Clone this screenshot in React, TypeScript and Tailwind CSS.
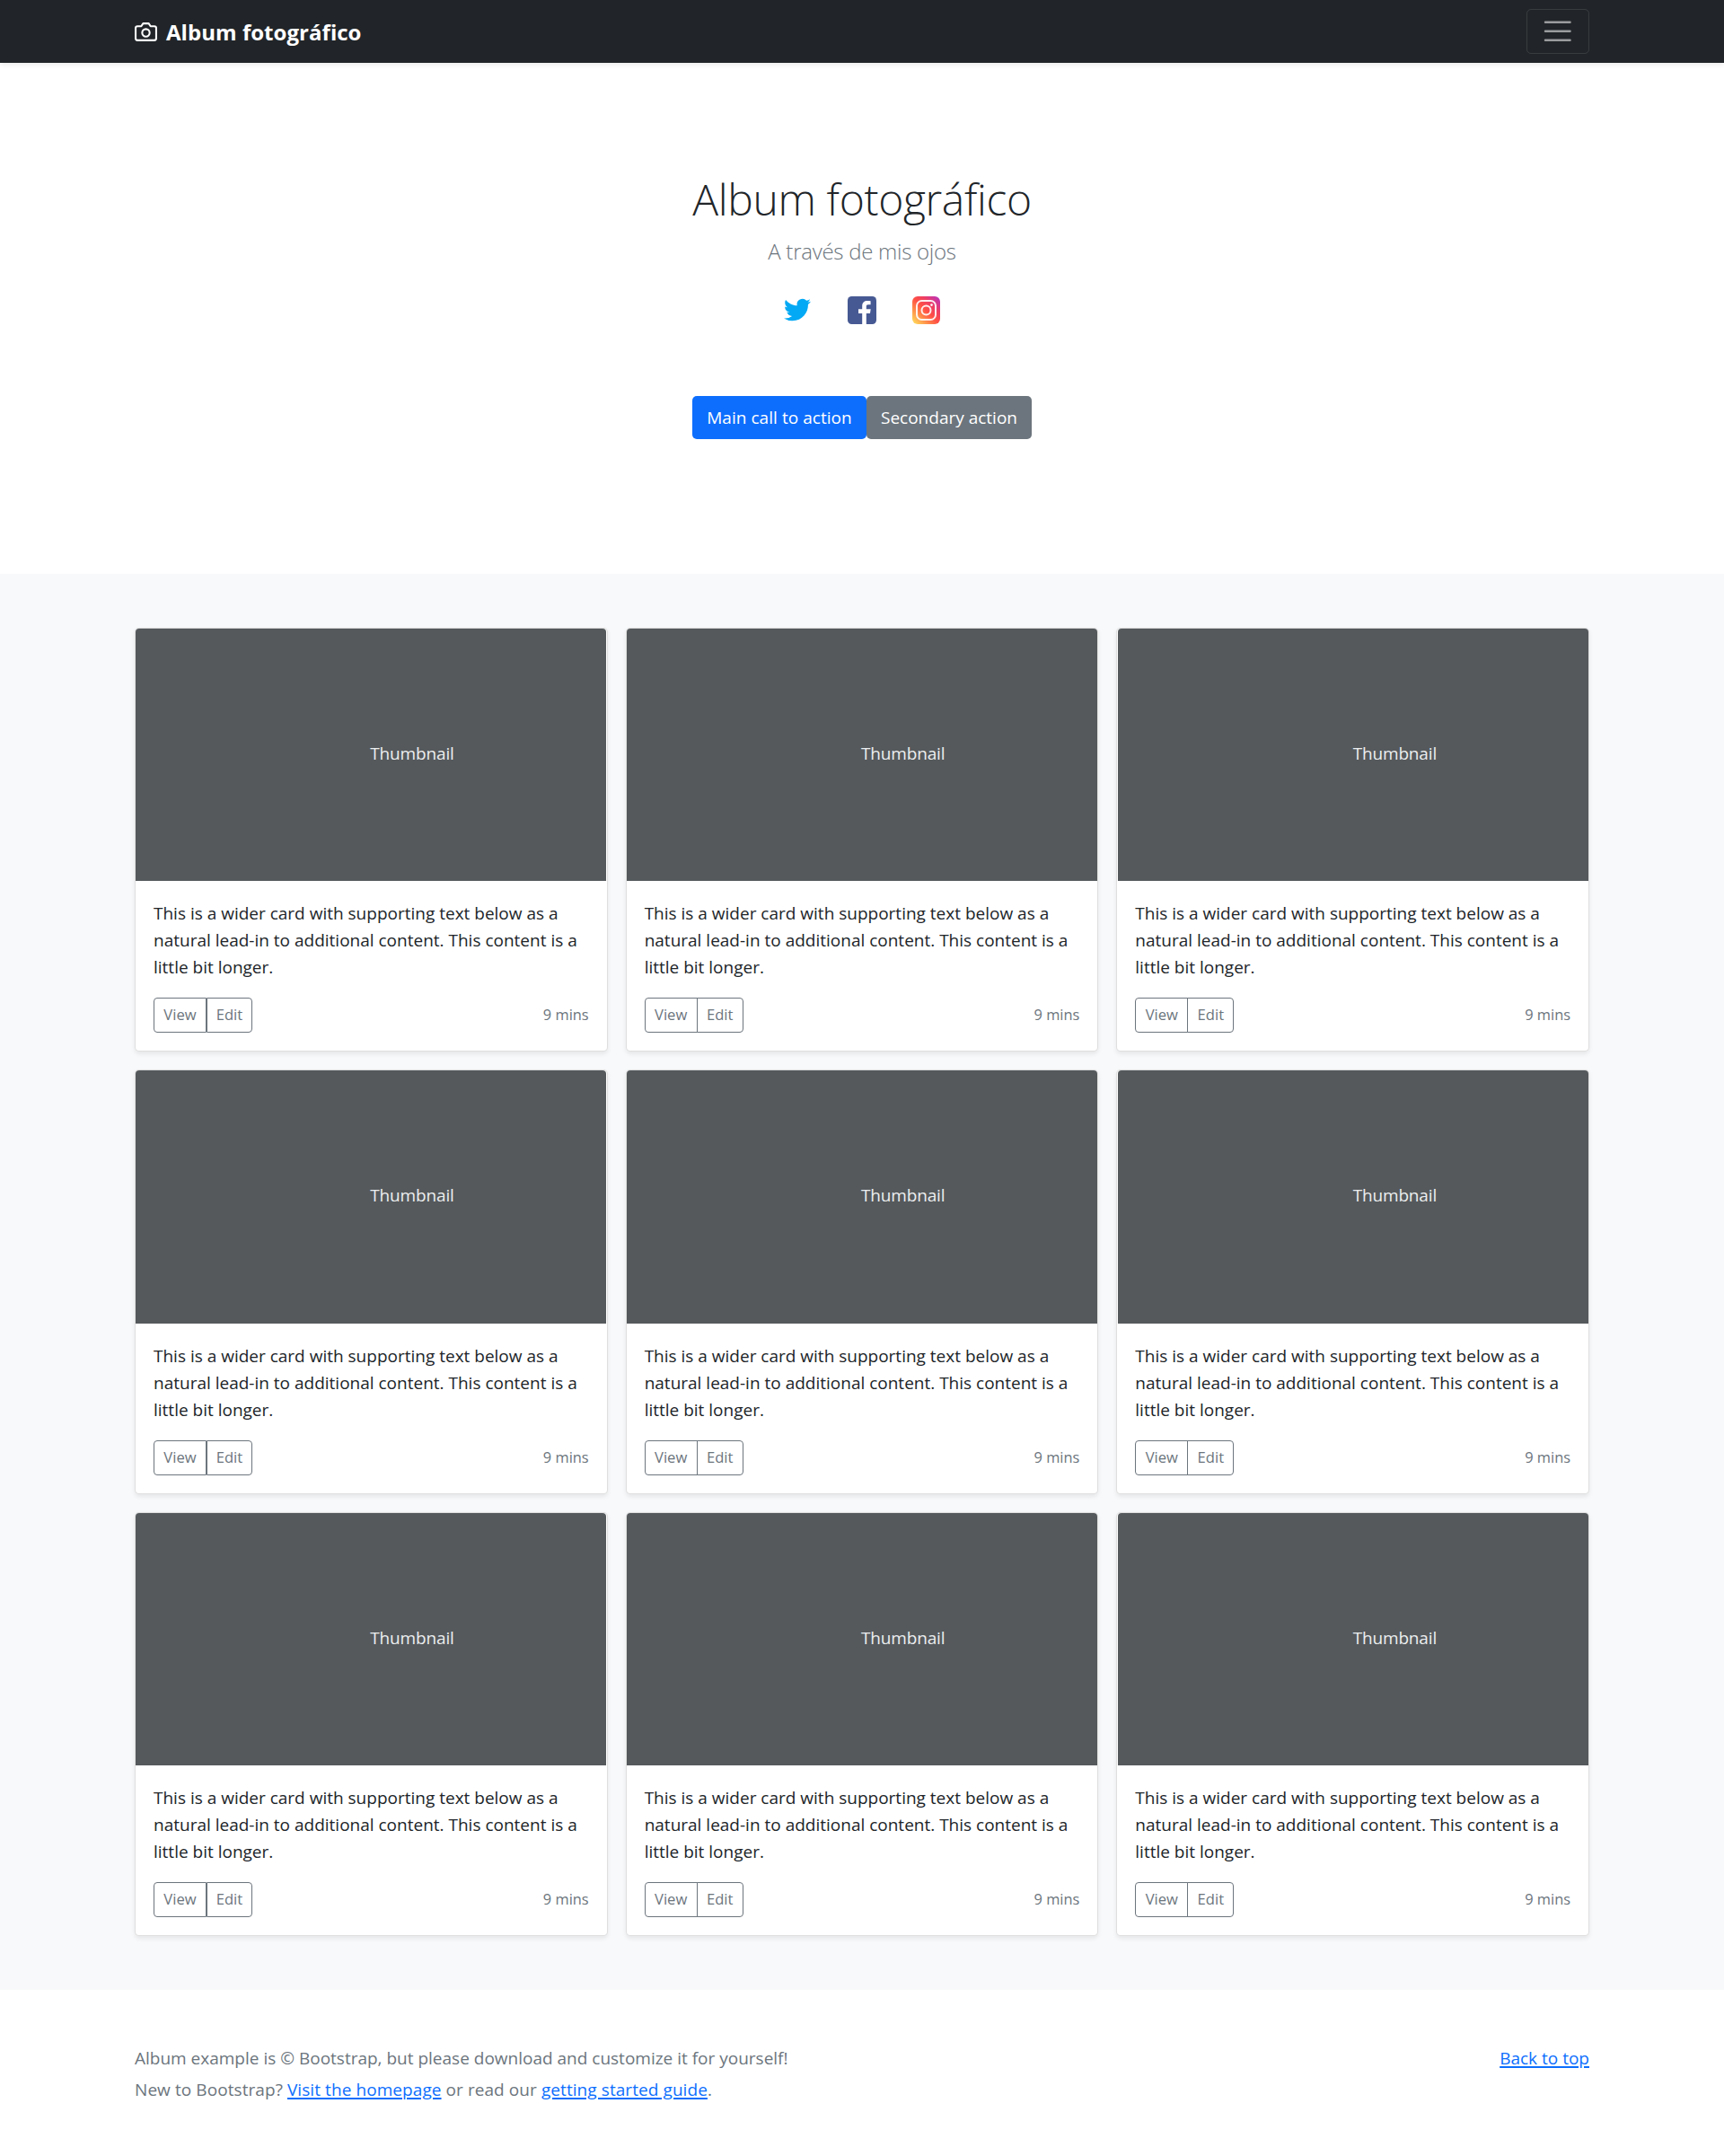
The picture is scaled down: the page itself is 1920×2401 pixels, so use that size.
type Column = {
  imageInset: string;
  viewButton: string;
  editButton: string;
};

const columns: Column[] = [
  { imageInset: "mr-px", viewButton: "w-[59px]", editButton: "w-[51px]" },
  { imageInset: "", viewButton: "w-[59px]", editButton: "-ml-px w-[52px]" },
  { imageInset: "ml-px", viewButton: "w-[59px]", editButton: "-ml-px w-[52px]" },
];

const cards = [0, 1, 2, 3, 4, 5, 6, 7, 8];

function CameraIcon() {
  return (
    <svg
      className="mr-[10px] size-[25px]"
      viewBox="0 0 24 24"
      fill="none"
      stroke="currentColor"
      strokeWidth="2"
      strokeLinecap="round"
      strokeLinejoin="round"
      aria-hidden="true"
    >
      <path d="M23 19a2 2 0 0 1-2 2H3a2 2 0 0 1-2-2V8a2 2 0 0 1 2-2h4l2-3h6l2 3h4a2 2 0 0 1 2 2z" />
      <circle cx="12" cy="13" r="4" />
    </svg>
  );
}

function Navbar() {
  return (
    <header className="h-[70px] bg-[#212529] shadow-[0_2.5px_5px_rgba(0,0,0,0.075)]">
      <div className="mx-auto flex h-full w-[1620px] items-center justify-between">
        <a href="#" className="flex items-center text-[24px] leading-[37.5px] font-bold text-white">
          <CameraIcon />
          <span className="pt-px tracking-[0.04px]">Album fotográfico</span>
        </a>
        <button
          aria-label="Toggle navigation"
          className="flex h-[50px] w-[70px] items-center justify-center rounded-[5px] border border-white/10"
        >
          <svg className="size-[37.5px]" viewBox="0 0 30 30" fill="none">
            <path
              d="M4 7h22M4 15h22M4 23h22"
              stroke="rgba(255,255,255,0.55)"
              strokeWidth="2"
              strokeLinecap="round"
            />
          </svg>
        </button>
      </div>
    </header>
  );
}

function TwitterIcon() {
  return (
    <svg className="size-[30px]" viewBox="0 0 24 24" fill="#03a9f4">
      <path d="M23.953 4.57a10 10 0 01-2.825.775 4.958 4.958 0 002.163-2.723c-.951.555-2.005.959-3.127 1.184a4.92 4.92 0 00-8.384 4.482C7.69 8.095 4.067 6.13 1.64 3.162a4.822 4.822 0 00-.666 2.475c0 1.71.87 3.213 2.188 4.096a4.904 4.904 0 01-2.228-.616v.06a4.923 4.923 0 003.946 4.827 4.996 4.996 0 01-2.212.085 4.936 4.936 0 004.604 3.417 9.867 9.867 0 01-6.102 2.105c-.39 0-.779-.023-1.17-.067a13.995 13.995 0 007.557 2.209c9.053 0 13.998-7.496 13.998-13.985 0-.21 0-.42-.015-.63A9.935 9.935 0 0024 4.59z" />
    </svg>
  );
}

function FacebookIcon() {
  return (
    <svg className="h-[31px] w-[32px]" viewBox="0 0 32 31">
      <rect width="32" height="31" rx="4.5" fill="#475993" />
      <path
        d="M16.2 31V19H12v-4.7h4.2v-3.5C16.2 7 18.6 5 22 5c1.6 0 3 .1 3.6.2v4.1H23c-1.8 0-2.2.9-2.2 2.2v2.8h4.9l-.7 4.7h-4.2v12z"
        fill="#fff"
      />
    </svg>
  );
}

function InstagramIcon() {
  return (
    <svg className="size-[31px]" viewBox="0 0 31 31" fill="none">
      <defs>
        <linearGradient id="instagram" x1="2" y1="29" x2="29" y2="2" gradientUnits="userSpaceOnUse">
          <stop offset="0" stopColor="#ffd45a" />
          <stop offset="0.3" stopColor="#ff8248" />
          <stop offset="0.5" stopColor="#ff4f45" />
          <stop offset="0.72" stopColor="#ee3f63" />
          <stop offset="1" stopColor="#c034b0" />
        </linearGradient>
      </defs>
      <rect width="31" height="31" rx="6" fill="url(#instagram)" />
      <rect x="5" y="5" width="21" height="21" rx="5.5" stroke="#fff" strokeOpacity="0.9" strokeWidth="2" />
      <circle cx="15.5" cy="15.5" r="5" stroke="#fff" strokeOpacity="0.9" strokeWidth="2" />
      <circle cx="21.5" cy="9.6" r="1.3" fill="#fff" />
    </svg>
  );
}

function Hero() {
  return (
    <section className="flex h-[569.2px] flex-col items-center pt-[122px]">
      <h1 className="text-[48px] leading-[60px] font-light tracking-[-0.35px]">Album fotográfico</h1>
      <p className="mt-[9px] text-[24px] leading-[37.5px] font-light tracking-[-0.27px] text-[#6c757d]">
        A través de mis ojos
      </p>
      <div className="mt-[31.5px] flex h-[31px] gap-[40px]">
        <a href="#" aria-label="Twitter" className="flex w-[32px] justify-center">
          <TwitterIcon />
        </a>
        <a href="#" aria-label="Facebook">
          <FacebookIcon />
        </a>
        <a href="#" aria-label="Instagram" className="w-[32px]">
          <InstagramIcon />
        </a>
      </div>
      <div className="mt-[80px] flex h-[48px] text-[19px] text-white">
        <a
          href="#"
          className="flex w-[194px] items-center justify-center rounded-[5px] bg-[#0d6efd] pt-px tracking-[0.05px]"
        >
          Main call to action
        </a>
        <a href="#" className="flex w-[184px] items-center justify-center rounded-[5px] bg-[#6c757d] pt-px">
          Secondary action
        </a>
      </div>
    </section>
  );
}

function Card({ column }: { column: Column }) {
  return (
    <article className="flex h-[472.3px] flex-col rounded-[5px] border border-black/12.5 bg-white shadow-[0_2.5px_5px_rgba(0,0,0,0.075)]">
      <div
        className={`flex h-[281.25px] shrink-0 items-center rounded-t-[4px] bg-[#55595c] pb-[3px] pl-[261.3px] text-[19px] tracking-[-0.15px] text-[#eceeef] ${column.imageInset}`}
      >
        Thumbnail
      </div>
      <div className="px-[20px] pt-[20.8px]">
        <p className="text-[19px] leading-[30px]">
          This is a wider card with supporting text below as a
          <br />
          natural lead-in to additional content. This content is a
          <br />
          little bit longer.
        </p>
        <div className="mt-[19px] flex items-center justify-between text-[16.6px] text-[#6c757d]">
          <div className="flex h-[39px]">
            <button className={`rounded-l-[4px] border border-[#6c757d] ${column.viewButton}`}>View</button>
            <button className={`rounded-r-[4px] border border-[#6c757d] ${column.editButton}`}>Edit</button>
          </div>
          <small className="text-[16.4px]">9 mins</small>
        </div>
      </div>
    </article>
  );
}

function Album() {
  return (
    <section className="bg-[#f8f9fa] py-[60px]">
      <div className="mx-auto grid w-[1620px] grid-cols-3 gap-[20px]">
        {cards.map((n) => (
          <Card key={n} column={columns[n % 3]} />
        ))}
      </div>
    </section>
  );
}

function Footer() {
  const link = "text-[#0d6efd] underline decoration-[2px] underline-offset-[2px]";
  return (
    <footer className="pt-[61px] text-[19px] leading-[30px] text-[#6c757d]">
      <div className="mx-auto flex w-[1620px] items-start justify-between">
        <div>
          <p className="mb-[5px]">Album example is © Bootstrap, but please download and customize it for yourself!</p>
          <p className="tracking-[0.075px]">
            New to Bootstrap?{" "}
            <a href="#" className={link}>
              Visit the homepage
            </a>{" "}
            or read our{" "}
            <a href="#" className={link}>
              getting started guide
            </a>
            .
          </p>
        </div>
        <a href="#" className={link}>
          Back to top
        </a>
      </div>
    </footer>
  );
}

export default function App() {
  return (
    <div className="h-[2401px] bg-white font-['Open_Sans','Noto_Sans',sans-serif] text-[#212529]">
      <Navbar />
      <main>
        <Hero />
        <Album />
      </main>
      <Footer />
    </div>
  );
}
